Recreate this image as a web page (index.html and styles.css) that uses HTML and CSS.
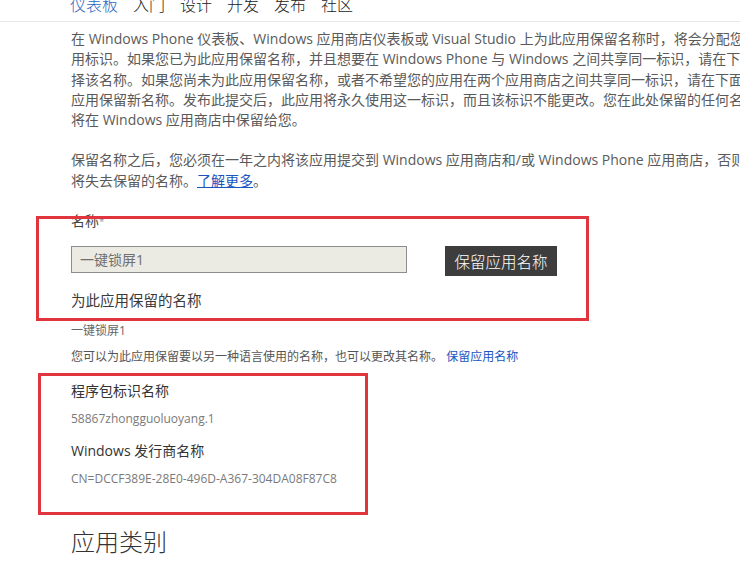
FILE: index.html
```html
<!DOCTYPE html>
<html lang="zh-CN">
<head>
<meta charset="utf-8">
<link rel="stylesheet" href="styles.css">
</head>
<body>
<div class="page">
  <nav class="nav">
    <a class="nav-item active">仪表板</a>
    <a class="nav-item">入门</a>
    <a class="nav-item">设计</a>
    <a class="nav-item">开发</a>
    <a class="nav-item">发布</a>
    <a class="nav-item">社区</a>
  </nav>
  <main class="content">
    <p class="para">在 Windows Phone 仪表板、Windows 应用商店仪表板或 Visual Studio 上为此应用保留名称时，将会分配您的应<br>用标识。如果您已为此应用保留名称，并且想要在 Windows Phone 与 Windows 之间共享同一标识，请在下面选<br>择该名称。如果您尚未为此应用保留名称，或者不希望您的应用在两个应用商店之间共享同一标识，请在下面为<br>应用保留新名称。发布此提交后，此应用将永久使用这一标识，而且该标识不能更改。您在此处保留的任何名称都<br>将在 Windows 应用商店中保留给您。</p>
    <p class="para">保留名称之后，您必须在一年之内将该应用提交到 Windows 应用商店和/或 Windows Phone 应用商店，否则您<br>将失去保留的名称。<a class="link">了解更多</a>。</p>

    <section class="reserve">
      <div class="label">名称<span class="star">*</span></div>
      <div class="form-row">
        <div class="input">一键锁屏1</div>
        <button class="btn">保留应用名称</button>
      </div>
      <h3 class="subhead">为此应用保留的名称</h3>
      <div class="small">一键锁屏1</div>
      <div class="note">您可以为此应用保留要以另一种语言使用的名称，也可以更改其名称。 <a class="blue">保留应用名称</a></div>
    </section>

    <section class="ident">
      <div class="id-title">程序包标识名称</div>
      <div class="id-value">58867zhongguoluoyang.1</div>
      <div class="id-title second">Windows 发行商名称</div>
      <div class="id-value">CN=DCCF389E-28E0-496D-A367-304DA08F87C8</div>
    </section>

    <h2 class="section-title">应用类别</h2>
  </main>
  <div class="mark mark-1"></div>
  <div class="mark mark-2"></div>
</div>
</body>
</html>
```
FILE: styles.css
```css
html, body {
  margin: 0;
  padding: 0;
  background: #fff;
  overflow: hidden;
}
body {
  font-family: "Open Sans", "Noto Sans CJK SC", sans-serif;
  color: #555;
  width: 740px;
  height: 564px;
}
.page {
  position: relative;
  width: 740px;
  height: 564px;
  overflow: hidden;
}
.nav {
  display: flex;
  gap: 15px;
  padding-left: 70px;
  margin-top: -14px;
  height: 35px;
  align-items: center;
  border-bottom: 1px solid #e8e8e8;
  font-size: 16px;
}
.nav-item {
  color: #222;
  font-family: "Noto Sans CJK SC", sans-serif;
  font-weight: 300;
}
.nav-item.active {
  color: #2b67c7;
}
.content {
  padding-left: 71px;
}
.para {
  margin: 7px 0 20px;
  font-size: 14px;
  line-height: 20.25px;
  white-space: nowrap;
  color: #5a5a5a;
}
.para + .para {
  margin-top: 0;
}
.link {
  color: #1a55c0;
  text-decoration: underline;
}
.reserve {
  margin-top: 20px;
}
.label {
  font-size: 14px;
  line-height: 20px;
  color: #444;
}
.star {
  color: #999;
  font-size: 10px;
  vertical-align: top;
}
.form-row {
  display: flex;
  align-items: flex-start;
  gap: 38px;
  margin-top: 15px;
}
.input {
  width: 326px;
  height: 25px;
  border: 1px solid #8d8d8d;
  background: #ebeae3;
  font-size: 14px;
  line-height: 25px;
  padding-left: 8px;
  color: #707070;
}
.btn {
  width: 112px;
  height: 30px;
  background: #3d3d3d;
  color: #fff;
  border: 0;
  font-family: "Noto Sans CJK SC", sans-serif;
  font-size: 15.5px;
  font-weight: 300;
  padding: 0;
}
.subhead {
  margin: 14px 0 0;
  font-size: 14.5px;
  font-weight: 400;
  line-height: 22px;
  color: #3a3a3a;
}
.small {
  margin-top: 11px;
  font-size: 12px;
  line-height: 16px;
  color: #666;
}
.note {
  margin-top: 10px;
  font-size: 12px;
  line-height: 16px;
  color: #555;
}
.blue {
  color: #1a55c0;
}
.ident {
  margin-top: 16px;
}
.id-title {
  font-size: 14px;
  line-height: 20px;
  color: #333;
}
.id-title.second {
  margin-top: 14px;
}
.id-value {
  margin-top: 10px;
  font-size: 12px;
  line-height: 16px;
  color: #7a7a7a;
}
.section-title {
  margin: 40px 0 0;
  font-size: 24px;
  font-weight: 300;
  line-height: 30px;
  color: #333;
}
.mark {
  position: absolute;
  border: 3px solid #e0353d;
  box-sizing: border-box;
}
.mark-1 {
  left: 36px;
  top: 216px;
  width: 553px;
  height: 105px;
}
.mark-2 {
  left: 38px;
  top: 373px;
  width: 330px;
  height: 142px;
}
```
